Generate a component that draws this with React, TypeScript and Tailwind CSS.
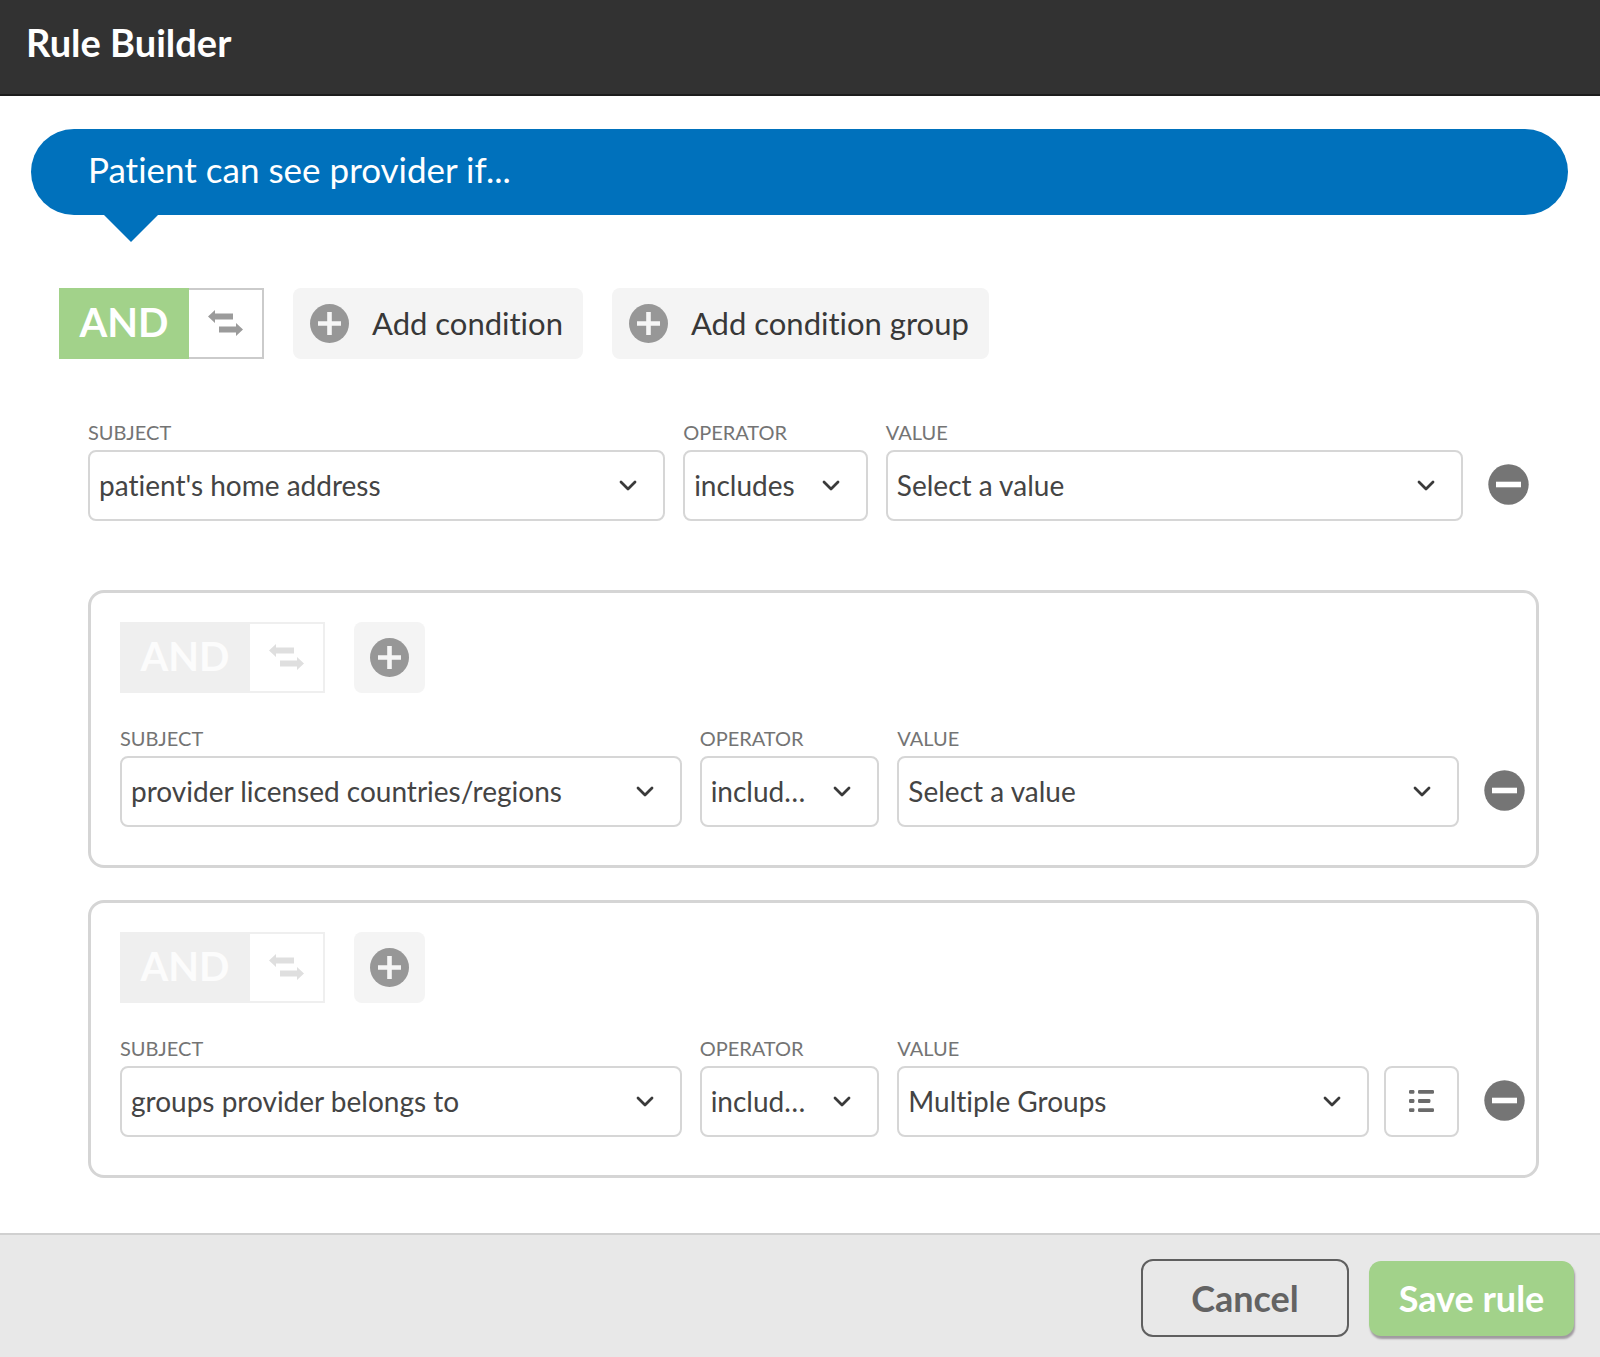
import React, { useId, useState } from 'react';
import clsx from 'clsx';

interface Condition {
  subject: string;
  operator: string;
  value: string;
  hasList?: boolean;
}

const ROOT_CONDITION: Condition = {
  subject: "patient's home address",
  operator: 'includes',
  value: 'Select a value',
};

const GROUPS: Condition[] = [
  { subject: 'provider licensed countries/regions', operator: 'includes', value: 'Select a value' },
  { subject: 'groups provider belongs to', operator: 'includes', value: 'Multiple Groups', hasList: true },
];

function SwapIcon() {
  return (
    <svg width="35" height="26" viewBox="0 0 35 26" fill="currentColor" aria-hidden="true">
      <path d="M0 6.5 7 0v3.6h18v5.8H7V13z" />
      <path d="M35 19.5 28 13v3.6H11v5.8h17V26z" />
    </svg>
  );
}

function PlusIcon() {
  return (
    <svg width="39" height="39" viewBox="0 0 39 39" className="shrink-0" aria-hidden="true">
      <circle cx="19.5" cy="19.5" r="19.5" fill="#979797" />
      <path d="M19.5 8v23M8 19.5h23" stroke="#f6f6f6" strokeWidth="4.6" />
    </svg>
  );
}

function MinusIcon() {
  return (
    <svg width="41" height="41" viewBox="0 0 41 41" aria-hidden="true">
      <circle cx="20.5" cy="20.5" r="20.2" fill="#757575" />
      <path d="M8 20.5h25" stroke="#fff" strokeWidth="5.6" />
    </svg>
  );
}

function ListIcon() {
  return (
    <svg width="25" height="22" viewBox="0 0 25 22" fill="#6b6b6b" aria-hidden="true">
      <rect x="0" y="0" width="5.4" height="3.8" rx="1.2" />
      <rect x="9" y="0" width="16" height="3.8" rx="1.2" />
      <rect x="0" y="9.1" width="5.4" height="3.8" rx="1.2" />
      <rect x="9" y="9.1" width="12.4" height="3.8" rx="1.2" />
      <rect x="0" y="18.2" width="5.4" height="3.8" rx="1.2" />
      <rect x="9" y="18.2" width="16" height="3.8" rx="1.2" />
    </svg>
  );
}

function LogicToggle({ disabled = false }: { disabled?: boolean }) {
  const [mode, setMode] = useState('AND');

  return (
    <div className="flex h-[71px]">
      <span
        className={clsx(
          'flex w-[130px] items-center justify-center pb-1 text-[40px] leading-none font-bold',
          disabled ? 'bg-[#efefef] text-[#fcfcfc]' : 'bg-[#a2d28a] text-white'
        )}
      >
        {mode}
      </span>
      <button
        type="button"
        aria-label="Switch operator"
        disabled={disabled}
        onClick={() => setMode(mode === 'AND' ? 'OR' : 'AND')}
        className={clsx(
          'flex w-[75px] items-center justify-center border-2 border-l-0 pb-0.5',
          disabled ? 'border-[#efefef] text-[#dfdfdf]' : 'border-[#cbcbcb] text-[#9b9b9b]'
        )}
      >
        <SwapIcon />
      </button>
    </div>
  );
}

function AddButton({ label }: { label?: string }) {
  return (
    <button
      type="button"
      aria-label={label ? undefined : 'Add'}
      className={clsx(
        'flex h-[71px] items-center rounded-lg bg-[#f4f4f4] text-[31px] leading-none text-[#383838]',
        label ? 'gap-[23px] pr-5 pl-[17px]' : 'w-[71px] justify-center'
      )}
    >
      <PlusIcon />
      {label}
    </button>
  );
}

interface SelectFieldProps {
  label: string;
  value: string;
  narrow?: boolean;
  children?: React.ReactNode;
}

function SelectField({ label, value, narrow = false, children }: SelectFieldProps) {
  const id = useId();

  return (
    <div className="min-w-0">
      <label htmlFor={id} className="block h-[34px] text-[20px] leading-[32px] text-[#747474]">
        {label}
      </label>
      <div className="flex gap-[15px]">
        <div className="relative min-w-0 flex-1">
          <select
            id={id}
            defaultValue={value}
            className={clsx(
              'h-[71px] w-full appearance-none rounded-lg border-2 border-[#d6d6d6] bg-white pb-0.5 pl-[9px] text-[28px] text-ellipsis text-[#444]',
              narrow ? 'pr-[70px]' : 'pr-[60px]'
            )}
          >
            <option>{value}</option>
          </select>
          <svg
            width="18"
            height="11"
            viewBox="0 0 18 11"
            className="pointer-events-none absolute top-[30px] right-[28px]"
            fill="none"
            stroke="#3a3a3a"
            strokeWidth="2.8"
            strokeLinecap="round"
            strokeLinejoin="round"
            aria-hidden="true"
          >
            <path d="m2 2 7 7 7-7" />
          </svg>
        </div>
        {children}
      </div>
    </div>
  );
}

function ConditionRow({ condition }: { condition: Condition }) {
  return (
    <div className="flex items-end gap-[25px]">
      <div className="grid min-w-0 flex-1 grid-cols-[25fr_8fr_25fr] gap-[18px]">
        <SelectField label="SUBJECT" value={condition.subject} />
        <SelectField label="OPERATOR" value={condition.operator} narrow />
        <SelectField label="VALUE" value={condition.value}>
          {condition.hasList && (
            <button
              type="button"
              aria-label="Edit list"
              className="flex h-[71px] w-[75px] items-center justify-center rounded-lg border-2 border-[#d6d6d6] pb-0.5"
            >
              <ListIcon />
            </button>
          )}
        </SelectField>
      </div>
      <button type="button" aria-label="Remove condition" className="flex h-[71px] items-center pb-0.5">
        <MinusIcon />
      </button>
    </div>
  );
}

export default function App() {
  return (
    <div className="flex min-h-screen flex-col bg-white font-[Lato,sans-serif] [font-variant-ligatures:none]">
      <header className="flex h-24 items-center border-b-2 border-[#1c1c1c] bg-[#323232] px-[26px] pb-2.5">
        <h1 className="text-[38px] leading-none font-bold text-white">Rule Builder</h1>
      </header>

      <main className="flex-1 pt-[33px] pb-[55px]">
        <div className="mr-8 ml-[31px]">
          <div className="flex h-[86px] items-center rounded-full bg-[#0071bc] px-[57px] pb-1.5 text-[35px] leading-none text-white">
            Patient can see provider if...
          </div>
          <svg width="54" height="27" viewBox="0 0 54 27" className="ml-[73px]" aria-hidden="true">
            <path d="M0 0h54L27 27z" fill="#0071bc" />
          </svg>
        </div>

        <div className="mt-[46px] ml-[59px] flex gap-[29px]">
          <LogicToggle />
          <AddButton label="Add condition" />
          <AddButton label="Add condition group" />
        </div>

        <div className="mt-[57px] mr-[61px] ml-[88px]">
          <div className="pr-[10px]">
            <ConditionRow condition={ROOT_CONDITION} />
          </div>

          <div className="mt-[69px] space-y-8">
            {GROUPS.map((group) => (
              <section
                key={group.subject}
                className="rounded-2xl border-3 border-[#d5d5d5] pt-[29px] pr-[11px] pb-[38px] pl-[29px]"
              >
                <div className="mb-[29px] flex gap-[29px]">
                  <LogicToggle disabled />
                  <AddButton />
                </div>
                <ConditionRow condition={group} />
              </section>
            ))}
          </div>
        </div>
      </main>

      <footer className="flex items-center justify-end gap-5 border-t-2 border-[#d0d0d0] bg-[#e8e8e8] pt-6 pr-[26px] pb-5">
        <button
          type="button"
          className="h-[78px] w-[208px] rounded-xl border-2 border-[#5f5f5f] text-[36px] leading-none font-bold text-[#636363]"
        >
          Cancel
        </button>
        <button
          type="button"
          className="h-[75px] w-[205px] rounded-xl bg-[#a2d28a] text-[36px] leading-none font-bold text-white shadow-[1px_3px_2px_#a09aa0]"
        >
          Save rule
        </button>
      </footer>
    </div>
  );
}
